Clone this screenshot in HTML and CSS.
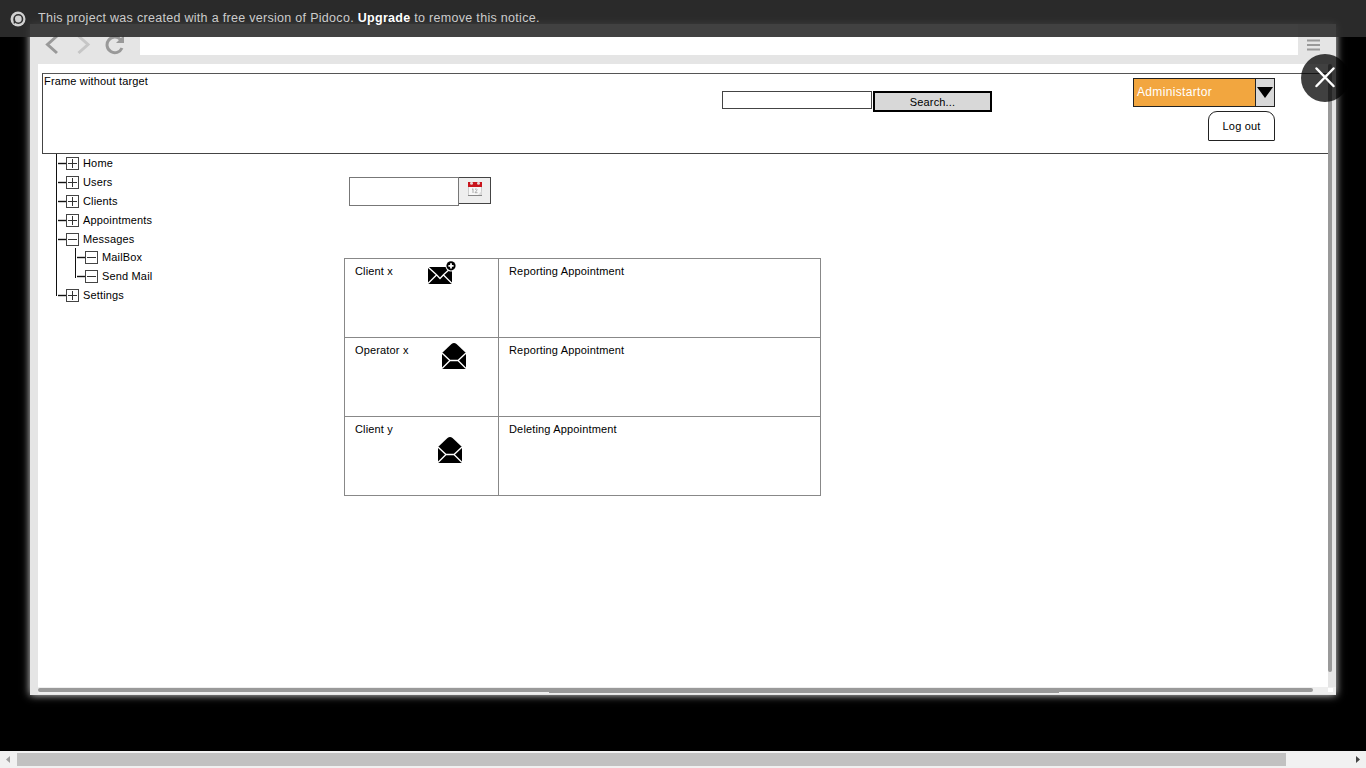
FILE: index.html
```html
<!DOCTYPE html>
<html lang="en">
<head>
<meta charset="utf-8">
<title>Messages - MailBox</title>
<link rel="stylesheet" href="styles.css">
</head>
<body>
<svg class="defs" width="0" height="0">
  <symbol id="plus" viewBox="0 0 21 13"><path d="M0 6.500h8" stroke="#111" stroke-width="1.400"/><path d="M10 6.500h9M14.500 2v9" stroke="#333" fill="none"/><rect x="8.500" y=".5" width="12" height="12" fill="none" stroke="#444"/></symbol>
  <symbol id="minus" viewBox="0 0 21 13"><path d="M0 6.500h8" stroke="#111" stroke-width="1.400"/><path d="M10 6.500h9" stroke="#333" fill="none"/><rect x="8.500" y=".5" width="12" height="12" fill="none" stroke="#444"/></symbol>
  <symbol id="open" viewBox="0 0 24 27"><path d="M0 10L9.500 1Q12 -.8 14.500 1L24 10V26H0Z"/><path d="M0 10L8 17.500H16L24 10M0 25.500L8 17.500M24 25.500L16 17.500" stroke="#fff" stroke-width="1.300" fill="none"/></symbol>
</svg>
<div class="notice">
  <svg class="logo" width="16" height="16" viewBox="0 0 16 16"><circle cx="8" cy="8" r="7.500" fill="#d0d0d0"/><circle cx="8.300" cy="8" r="4.200" fill="none" stroke="#303030" stroke-width="1.600"/><path d="M4.400 8v4.500" stroke="#303030" stroke-width="1.400"/></svg>
  <p class="notice-text">This project was created with a free version of Pidoco. <b>Upgrade</b> to remove this notice.</p>
</div>
<main class="stage">
  <div class="window">
    <div class="toolbar">
      <svg class="nav" width="110" height="31" viewBox="30 24 110 31"><path d="M57 36L47.500 44.500L57 53" fill="none" stroke="#999" stroke-width="3"/><path d="M78.500 36L88 44.500L78.500 53" fill="none" stroke="#c6c6c6" stroke-width="3"/><path d="M120.500 39.500A7.800 7.800 0 1 0 122 48" fill="none" stroke="#999" stroke-width="3"/><path d="M124 35v8h-8z" fill="#999"/></svg>
      <div class="address"></div>
      <svg width="38" height="31" viewBox="1298 24 38 31"><path d="M1307 40.500h13M1307 45h13M1307 49.500h13" stroke="#999" stroke-width="2"/></svg>
    </div>
    <div class="view">
      <div class="page">
        <header class="frame">
          <span class="frame-label">Frame without target</span>
          <div class="search"><div class="search-input"></div><div class="search-button">Search...</div></div>
          <div class="account">
            <div class="select"><span class="select-value">Administartor</span><span class="select-arrow"><svg width="16" height="11"><path d="M0 0h16L8 11z"/></svg></span></div>
            <div class="logout">Log out</div>
          </div>
        </header>
        <div class="content">
          <ul class="tree">
            <li><svg><use href="#plus"/></svg><span>Home</span></li>
            <li><svg><use href="#plus"/></svg><span>Users</span></li>
            <li><svg><use href="#plus"/></svg><span>Clients</span></li>
            <li><svg><use href="#plus"/></svg><span>Appointments</span></li>
            <li><svg><use href="#minus"/></svg><span>Messages</span></li>
            <li class="sub"><svg><use href="#minus"/></svg><span>MailBox</span></li>
            <li class="sub last"><svg><use href="#minus"/></svg><span>Send Mail</span></li>
            <li><svg><use href="#plus"/></svg><span>Settings</span></li>
          </ul>
          <section class="mailbox">
            <div class="date">
              <div class="date-input"></div>
              <div class="date-button"><svg width="14" height="16" viewBox="0 0 14 16"><path d="M0 1h14v14H0z" fill="#f7f7f7"/><path d="M0 1h14v5H0z" fill="#c9151d"/><circle cx="3.500" cy="2.200" r="1.500" fill="#e8d4d4"/><circle cx="10.500" cy="2.200" r="1.500" fill="#e8d4d4"/><path d="M.5 6v8.500h13V6" fill="none" stroke="#ccc"/><path d="M0 14.500h14" stroke="#888"/><path d="M4 8.500l1-.8V12M7 8.500q1.500-1.500 2 0q0 1-2 3.200h2.500" fill="none" stroke="#999" stroke-width=".8"/><path d="M10 14l3.500-4v4z" fill="#ddd"/></svg></div>
            </div>
            <div class="messages">
              <div class="cell">Client x<svg class="mail-new" width="28" height="23" viewBox="0 0 28 23"><path d="M0 6h24v17H0z"/><path d="M0 6L8.500 13.800L12 17.500L15.500 13.800L24 6M0 22.500L8.500 14M24 22.500L15.500 14" stroke="#fff" stroke-width="1.300" fill="none"/><circle cx="23" cy="5" r="5.500" fill="#fff"/><circle cx="23" cy="4.800" r="4.600"/><path d="M23 2.200v5.200M20.400 4.800h5.200" stroke="#fff" stroke-width="1.800"/></svg></div>
              <div class="cell">Reporting Appointment</div>
              <div class="cell">Operator x<svg class="mail-open" width="24" height="27"><use href="#open"/></svg></div>
              <div class="cell">Reporting Appointment</div>
              <div class="cell">Client y<svg class="mail-open low" width="24" height="27"><use href="#open"/></svg></div>
              <div class="cell">Deleting Appointment</div>
            </div>
          </section>
        </div>
      </div>
      <div class="vscroll"></div>
    </div>
    <div class="hscroll"><div class="bars"><i class="track"></i><i class="inner"></i></div><i class="corner"></i></div>
    <div class="close"><svg width="48" height="48"><path d="M15.500 14.500L32.500 32M32.500 14.500L15.500 32" stroke="#fff" stroke-width="2.500" stroke-linecap="round"/></svg></div>
  </div>
</main>
<footer class="scrollbar">
  <svg width="17" height="17"><path d="M6 8.500L10 5v7z" fill="#a0a0a0"/></svg>
  <div class="scroll-area"><div class="thumb"></div></div>
  <svg width="17" height="17"><path d="M11 8.500L7 5v7z" fill="#444"/></svg>
</footer>
</body>
</html>
```
FILE: styles.css
```css
* { box-sizing: border-box; }
body { margin: 0; width: 1366px; height: 768px; overflow: hidden; background: #000; color: #000; font: 11px/13px "Liberation Sans", Arial, sans-serif; letter-spacing: .16px; display: flex; flex-direction: column; }
svg { display: block; flex: none; }
.defs { position: absolute; }
.notice { position: absolute; z-index: 2; top: 0; left: 0; width: 100%; height: 37px; background: rgba(46,46,46,.91); display: flex; align-items: center; gap: 12px; padding-left: 10px; }
.notice-text { margin: 0; padding-bottom: 1px; font-size: 12.5px; line-height: 16px; color: #ccc; letter-spacing: .3px; white-space: nowrap; }
.notice-text b { color: #fff; }
.stage { height: 751px; padding: 24px 30px; }
.window { position: relative; width: 1306px; height: 671px; background: #e5e5e5; box-shadow: 0 0 8px #ddd; display: flex; flex-direction: column; }
.toolbar { height: 40px; display: flex; flex: none; }
.address { flex: 1; height: 31px; background: #fff; }
.view { height: 623px; display: flex; padding-left: 8px; flex: none; }
.page { width: 1290px; background: #fff; padding: 9px 0 0 4px; }
.vscroll { width: 4px; height: 608px; background: #999; border-radius: 2px; }
.hscroll { height: 7px; margin-left: 8px; padding-top: 1px; display: flex; background: #eee; }
.bars { width: 1290px; }
.track { display: block; width: 1275px; height: 4px; background: #999; border-radius: 2px; }
.inner { display: block; width: 510px; height: 1px; margin-left: 511px; background: #999; }
.corner { width: 5px; height: 4px; background: #fff; }
.close { position: absolute; left: 1271px; top: 30px; width: 48px; height: 48px; border-radius: 50%; background: rgba(0,0,0,.75); }
.frame { height: 81px; border: 1px solid #444; border-top-color: #555; border-right: 0; display: flex; }
.frame-label { width: 679px; padding: 1px 0 0 1px; }
.search { display: flex; gap: 1px; width: 411px; padding-top: 17px; }
.search-input { width: 150px; height: 18px; border: 1px solid #444; }
.search-button { width: 119px; height: 21px; border: 2px solid #000; background: #d8d8d8; text-align: center; padding-top: 3px; }
.account { width: 142px; padding-top: 4px; display: flex; flex-direction: column; align-items: flex-end; gap: 4px; }
.select { width: 142px; height: 29px; border: 1px solid #222; background: #f2a63f; display: flex; color: #fff; font-size: 12px; letter-spacing: .34px; }
.select-value { flex: 1; padding: 7px 0 0 3px; }
.select-arrow { width: 19px; border-left: 1px solid #222; background: #d8d8d8; display: flex; align-items: center; justify-content: center; }
.logout { width: 67px; height: 30px; border: 1px solid #222; border-radius: 9px 9px 1px 1px; text-align: center; padding-top: 8px; }
.content { display: flex; }
.tree { list-style: none; margin: 0 0 0 14px; padding: 0; width: 288px; height: 142px; border-left: 1px solid #111; }
.tree li { height: 18.9px; display: flex; align-items: center; gap: 4px; padding-left: 1px; }
.tree svg { width: 21px; height: 13px; }
.tree .sub { margin-left: 18px; border-left: 1px solid #111; }
.tree .last { border-image: linear-gradient(#111 55%, transparent 55%) 1; border-width: 0 0 0 1px; }
.mailbox { padding-top: 23px; }
.date { display: flex; margin-left: 5px; }
.date-input { width: 110px; height: 29px; border: 1px solid #777; }
.date-button { width: 32px; height: 27px; border: 1px solid #444; border-left: 0; background: #eee; padding: 3px 0 0 9px; }
.messages { display: grid; grid-template-columns: 154px 322px; grid-template-rows: repeat(3, 79px); width: 477px; margin-top: 52px; border: solid #888; border-width: 1px 0 0 1px; }
.cell { border: solid #888; border-width: 0 1px 1px 0; padding: 6px 10px; display: flex; justify-content: space-between; }
.mail-new { margin: -4px 32px 0 0; }
.mail-open { margin: -1px 22px 0 0; }
.mail-open.low { margin: 14px 26px 0 0; }
.scrollbar { height: 17px; display: flex; flex: none; background: #f1f1f1; }
.scroll-area { flex: 1; padding-top: 2px; }
.thumb { width: 1269px; height: 13px; background: #c1c1c1; }
```
